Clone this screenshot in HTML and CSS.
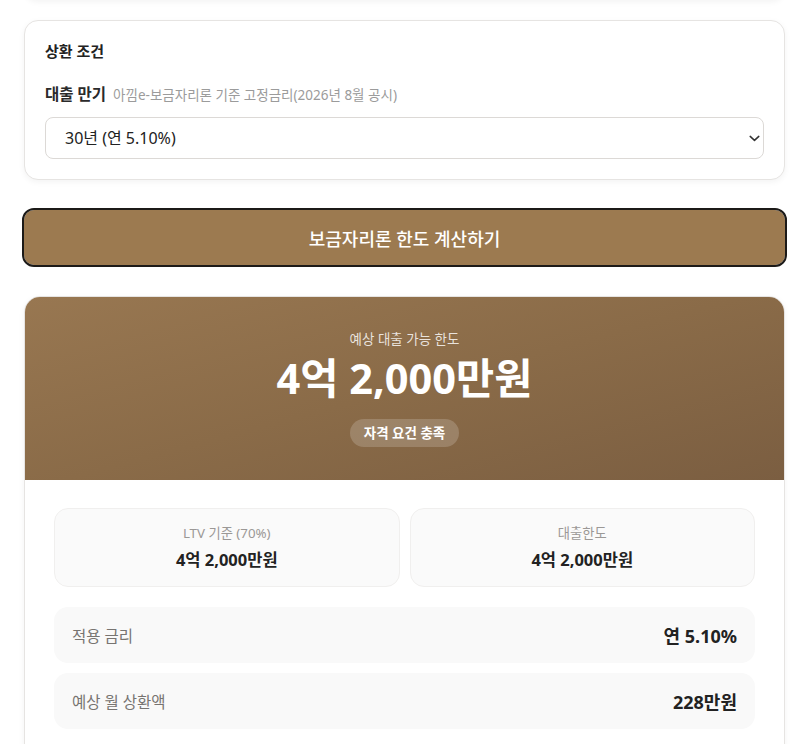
FILE: index.html
```html
<!DOCTYPE html>
<html lang="ko">
<head>
<meta charset="utf-8">
<title>보금자리론 한도 계산기</title>
<link rel="stylesheet" href="styles.css">
</head>
<body>
<div class="page">
  <div class="card prev"></div>

  <section class="card terms">
    <h2 class="card-title">상환 조건</h2>
    <div class="field-label">
      <span class="label-main">대출 만기</span>
      <span class="label-sub">아낌e-보금자리론 기준 고정금리(2026년 8월 공시)</span>
    </div>
    <div class="select-wrap">
      <select class="select">
        <option>30년 (연 5.10%)</option>
      </select>
      <svg class="chevron" width="11" height="7" viewBox="0 0 11 7" aria-hidden="true">
        <path d="M1.2 1.4 L5.5 5.4 L9.8 1.4" fill="none" stroke="#333" stroke-width="1.5" stroke-linecap="round" stroke-linejoin="round"/>
      </svg>
    </div>
  </section>

  <button class="calc-btn" type="button">보금자리론 한도 계산하기</button>

  <section class="card result">
    <div class="result-head">
      <div class="head-label">예상 대출 가능 한도</div>
      <div class="head-amount">4억 2,000만원</div>
      <span class="pill">자격 요건 충족</span>
    </div>
    <div class="result-body">
      <div class="stat-grid">
        <div class="stat">
          <div class="stat-label">LTV 기준 (70%)</div>
          <div class="stat-value">4억 2,000만원</div>
        </div>
        <div class="stat">
          <div class="stat-label">대출한도</div>
          <div class="stat-value">4억 2,000만원</div>
        </div>
      </div>
      <div class="row">
        <span class="row-label">적용 금리</span>
        <span class="row-value">연 5.10%</span>
      </div>
      <div class="row">
        <span class="row-label">예상 월 상환액</span>
        <span class="row-value">228만원</span>
      </div>
    </div>
  </section>
</div>
</body>
</html>
```
FILE: styles.css
```css
* { box-sizing: border-box; }

html, body {
  margin: 0;
  padding: 0;
  background: #ffffff;
}

body {
  font-family: "Noto Sans", "Noto Sans CJK KR", sans-serif;
  color: #222222;
  overflow: hidden;
}

.page {
  padding: 0 15px 0 24px;
  display: flex;
  flex-direction: column;
}

.card {
  background: #ffffff;
  border: 1px solid #e6e4e2;
  border-radius: 14px;
  box-shadow: 0 2px 6px rgba(0, 0, 0, 0.05);
}

.prev {
  height: 40px;
  margin-top: -40px;
  margin-bottom: 20px;
}

.terms {
  padding: 20px 20px 20px;
}

.card-title {
  margin: 0;
  font-size: 15px;
  line-height: 20px;
  font-weight: 700;
  color: #222;
}

.field-label {
  margin-top: 22px;
  display: flex;
  align-items: baseline;
  gap: 7px;
  line-height: 22px;
}

.label-main {
  font-size: 15.5px;
  font-weight: 700;
  color: #2a2a2a;
}

.label-sub {
  font-size: 13.5px;
  color: #9b9b9b;
}

.select-wrap {
  position: relative;
  margin-top: 11px;
}

.select {
  appearance: none;
  -webkit-appearance: none;
  width: 100%;
  height: 42px;
  padding: 0 40px 0 19px;
  border: 1px solid #dcd9d6;
  border-radius: 8px;
  background: #ffffff;
  font-family: "Noto Sans", "Noto Sans CJK KR", sans-serif;
  font-size: 16px;
  color: #222;
}

.chevron {
  position: absolute;
  right: 4px;
  top: 18px;
}

.calc-btn {
  margin-top: 30px;
  height: 55px;
  border: none;
  outline: 2px solid #1c1a18;
  border-radius: 10px;
  background: #9c7a50;
  color: #ffffff;
  font-family: "Noto Sans", "Noto Sans CJK KR", sans-serif;
  font-size: 18px;
  font-weight: 500;
}

.result {
  margin-top: 31px;
  overflow: hidden;
  border-radius: 16px;
}

.result-head {
  display: flex;
  flex-direction: column;
  align-items: center;
  padding: 32px 20px 33px;
  background: linear-gradient(165deg, #987751 0%, #8a6b48 50%, #7b5e41 100%);
  color: #ffffff;
}

.head-label {
  font-size: 13.5px;
  line-height: 20px;
  color: rgba(255, 255, 255, 0.82);
}

.head-amount {
  margin-top: 5px;
  font-size: 41.5px;
  line-height: 48px;
  font-weight: 700;
  color: #ffffff;
}

.pill {
  margin-top: 17px;
  height: 28px;
  line-height: 28px;
  padding: 0 14px;
  border-radius: 14px;
  background: rgba(255, 255, 255, 0.18);
  font-size: 13.5px;
  font-weight: 700;
  color: #ffffff;
}

.result-body {
  padding: 28px 29px 30px;
  display: flex;
  flex-direction: column;
  gap: 10px;
}

.stat-grid {
  display: grid;
  grid-template-columns: 1fr 1fr;
  gap: 10px;
  margin-bottom: 10px;
}

.stat {
  background: #fafafa;
  border: 1px solid #f0efee;
  border-radius: 14px;
  padding: 15px 12px 14px;
  text-align: center;
}

.stat-label {
  font-size: 13.3px;
  line-height: 18px;
  color: #9b9896;
}

.stat-value {
  margin-top: 6px;
  font-size: 16.5px;
  line-height: 24px;
  font-weight: 700;
  color: #222;
}

.row {
  height: 56px;
  display: flex;
  align-items: center;
  justify-content: space-between;
  padding: 0 18px;
  background: #f9f9f9;
  border-radius: 14px;
}

.row-label {
  font-size: 15.5px;
  color: #777471;
}

.row-value {
  font-size: 18px;
  font-weight: 700;
  color: #222;
}
```
